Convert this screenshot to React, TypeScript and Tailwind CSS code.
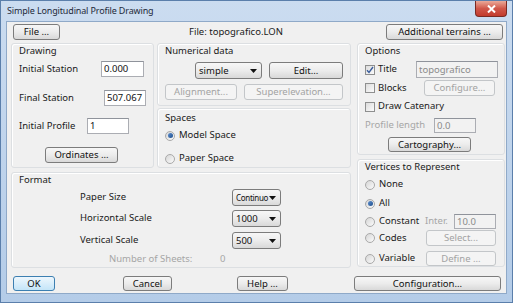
import React from 'react';

type BtnProps = {
  children: React.ReactNode;
  className?: string;
  disabled?: boolean;
  primary?: boolean;
};

const Btn: React.FC<BtnProps> = ({ children, className = '', disabled, primary }) => (
  <div
    className={`flex items-center justify-center rounded-[3px] border leading-none ${
      disabled
        ? 'border-[#c3c6c9] bg-[#f4f4f4] text-[#a3a3a3]'
        : primary
          ? 'border-[#3c7fb1] bg-gradient-to-b from-[#eef7fd] to-[#c4e5f8] text-[#111]'
          : 'border-[#7c7c7c] bg-gradient-to-b from-[#f7f7f7] via-[#ececec] to-[#d9d9d9] text-[#111]'
    } ${className}`}
  >
    {children}
  </div>
);

const Combo: React.FC<{ value: string; className?: string; textClass?: string }> = ({ value, className = '', textClass = '' }) => (
  <div
    className={`flex items-center justify-between rounded-[3px] border border-[#7c7c7c] bg-gradient-to-b from-[#f7f7f7] via-[#ececec] to-[#d9d9d9] pl-[3px] pr-[4px] leading-none text-[#111] ${className}`}
  >
    <span className={textClass}>{value}</span>
    <svg width="7" height="4" viewBox="0 0 7 4" className="shrink-0">
      <path d="M0 0h7L3.5 4z" fill="#111" />
    </svg>
  </div>
);

const Field: React.FC<{ value: string; className?: string; disabled?: boolean }> = ({ value, className = '', disabled }) => (
  <div
    className={`flex items-center border border-[#abadb3] border-t-[#8f939b] pl-[2px] leading-none ${
      disabled ? 'bg-[#f2f2f2] text-[#8a8a8a]' : 'bg-white text-[#111]'
    } ${className}`}
  >
    {value}
  </div>
);

const Check: React.FC<{ checked?: boolean }> = ({ checked }) => (
  <div className="flex h-[10px] w-[10px] shrink-0 items-center justify-center border border-[#8e8f8f] bg-gradient-to-br from-[#dcdcdc] to-[#fbfbfb]">
    {checked && (
      <svg width="8" height="8" viewBox="0 0 8 8">
        <path d="M1 4.2l2 2.3L7 1" stroke="#3a5d9c" strokeWidth="1.4" fill="none" />
      </svg>
    )}
  </div>
);

const Radio: React.FC<{ checked?: boolean }> = ({ checked }) => (
  <div className="flex h-[10px] w-[10px] shrink-0 items-center justify-center rounded-full border border-[#a9a9a9] bg-gradient-to-br from-[#d6d6d6] to-[#fbfbfb]">
    {checked && <div className="h-[5px] w-[5px] rounded-full bg-gradient-to-br from-[#5d8fd0] to-[#1f4f8c]" />}
  </div>
);

const Group: React.FC<{ title: string; className?: string; children?: React.ReactNode }> = ({ title, className = '', children }) => (
  <div className={`flex flex-col rounded-[3px] border border-[#dcdfe2] shadow-[inset_1px_1px_0_#ffffff] ${className}`}>
    <div className="h-[13px] pl-[7px] leading-[13px]">{title}</div>
    {children}
  </div>
);

export default function App() {
  return (
    <div className="flex h-[303px] w-[513px] flex-col overflow-hidden border border-[#5b7fab] bg-gradient-to-b from-[#cbdcf0] to-[#b4cce8] font-['Noto_Sans',sans-serif] text-[9.5px] text-[#1a1a1a]">
      {/* Title bar */}
      <div className="flex h-[20px] shrink-0 items-start justify-between">
        <div className="pl-[6px] pt-[2px] text-[9px] leading-[16px] tracking-[-0.15px] text-[#1e2a3a]">Simple Longitudinal Profile Drawing</div>
        <div className="mr-[5px] flex h-[16px] w-[32px] items-center justify-center rounded-b-[4px] border border-t-0 border-[#7a2a22] bg-gradient-to-b from-[#e9a99a] via-[#d0574a] to-[#c23a2c]">
          <svg width="9" height="8" viewBox="0 0 9 8">
            <path d="M1 0.5l7 7M8 0.5l-7 7" stroke="#fff" strokeWidth="2" />
          </svg>
        </div>
      </div>

      {/* Client area */}
      <div className="mx-[5px] flex h-[273px] shrink-0 flex-col border border-[#8fa9c8] bg-[#f0f0f0]">
        {/* Top row */}
        <div className="mt-[2px] flex h-[16px] items-center">
          <Btn className="ml-[6px] h-[16px] w-[47px]">File ...</Btn>
          <div className="flex-1 pl-[129px]">File: topografico.LON</div>
          <Btn className="mr-[3px] h-[16px] w-[117px]">Additional terrains ...</Btn>
        </div>

        {/* Main */}
        <div className="mt-[3px] flex">
          {/* Left column */}
          <div className="ml-[4px] flex w-[340px] flex-col">
            <div className="flex h-[125px] gap-[3px]">
              <Group title="Drawing" className="w-[143px]">
                <div className="mt-[4px] flex h-[16px] items-center pl-[7px]">
                  <span className="w-[82px]">Initial Station</span>
                  <Field value="0.000" className="h-[16px] w-[43px]" />
                </div>
                <div className="mt-[13px] flex h-[16px] items-center pl-[7px]">
                  <span className="w-[85px]">Final Station</span>
                  <Field value="507.067" className="h-[16px] w-[42px]" />
                </div>
                <div className="mt-[12px] flex h-[16px] items-center pl-[7px]">
                  <span className="w-[68px]">Initial Profile</span>
                  <Field value="1" className="h-[16px] w-[42px]" />
                </div>
                <div className="mt-[13px] flex pl-[33px]">
                  <Btn className="h-[16px] w-[73px]">Ordinates ...</Btn>
                </div>
              </Group>

              <div className="flex w-[194px] flex-col gap-[2px]">
                <Group title="Numerical data" className="h-[63px]">
                  <div className="mt-[5px] flex h-[17px] gap-[7px] pl-[37px]">
                    <Combo value="simple" className="h-[17px] w-[67px]" />
                    <Btn className="h-[17px] w-[74px]">Edit...</Btn>
                  </div>
                  <div className="mt-[5px] flex h-[16px] gap-[7px] pl-[7px]">
                    <Btn disabled className="h-[16px] w-[72px]">Alignment...</Btn>
                    <Btn disabled className="h-[16px] w-[99px]">Superelevation...</Btn>
                  </div>
                </Group>
                <Group title="Spaces" className="h-[60px] pt-[2px]">
                  <div className="mt-[5px] flex h-[13px] items-center gap-[4px] pl-[7px]">
                    <Radio checked />
                    <span>Model Space</span>
                  </div>
                  <div className="mt-[10px] flex h-[13px] items-center gap-[4px] pl-[7px]">
                    <Radio />
                    <span>Paper Space</span>
                  </div>
                </Group>
              </div>
            </div>

            <Group title="Format" className="mt-[4px] h-[96px]">
              <div className="mt-[3px] flex h-[17px] items-center pl-[68px]">
                <span className="w-[152px]">Paper Size</span>
                <Combo value="Continuo" textClass="text-[8px] tracking-[-0.3px]" className="h-[17px] w-[49px]" />
              </div>
              <div className="mt-[4px] flex h-[17px] items-center pl-[68px]">
                <span className="w-[152px]">Horizontal Scale</span>
                <Combo value="1000" className="h-[17px] w-[49px]" />
              </div>
              <div className="mt-[5px] flex h-[17px] items-center pl-[68px]">
                <span className="w-[152px]">Vertical Scale</span>
                <Combo value="500" className="h-[17px] w-[49px]" />
              </div>
              <div className="mt-[4px] flex h-[12px] items-center pl-[97px] text-[#a6a6a6]">
                <span className="w-[111px]">Number of Sheets:</span>
                <span>0</span>
              </div>
            </Group>
          </div>

          {/* Right column */}
          <div className="ml-[6px] flex w-[148px] flex-col gap-[4px]">
            <Group title="Options" className="h-[112px]">
              <div className="mt-[4px] flex h-[17px] items-center pl-[7px]">
                <div className="flex w-[51px] items-center gap-[3px]">
                  <Check checked />
                  <span>Title</span>
                </div>
                <Field value="topografico" disabled className="h-[17px] w-[82px]" />
              </div>
              <div className="mt-[2px] flex h-[16px] items-center pl-[7px]">
                <div className="flex w-[59px] items-center gap-[3px]">
                  <Check />
                  <span>Blocks</span>
                </div>
                <Btn disabled className="h-[16px] w-[71px]">Configure...</Btn>
              </div>
              <div className="mt-[4px] flex h-[13px] items-center gap-[3px] pl-[7px]">
                <Check />
                <span>Draw Catenary</span>
              </div>
              <div className="mt-[5px] flex h-[15px] items-center pl-[7px] text-[#a6a6a6]">
                <span className="w-[69px]">Profile length</span>
                <Field value="0.0" disabled className="h-[15px] w-[42px]" />
              </div>
              <div className="mt-[4px] flex pl-[30px]">
                <Btn className="h-[15px] w-[83px]">Cartography...</Btn>
              </div>
            </Group>

            <Group title="Vertices to Represent" className="h-[108px]">
              <div className="mt-[5px] flex h-[13px] items-center gap-[4px] pl-[7px]">
                <Radio />
                <span>None</span>
              </div>
              <div className="mt-[6px] flex h-[13px] items-center gap-[4px] pl-[7px]">
                <Radio checked />
                <span>All</span>
              </div>
              <div className="mt-[4px] flex h-[16px] items-center pl-[7px]">
                <div className="flex w-[60px] items-center gap-[4px]">
                  <Radio />
                  <span>Constant</span>
                </div>
                <span className="w-[29px] text-[#a6a6a6]">Inter.</span>
                <Field value="10.0" disabled className="h-[15px] w-[42px]" />
              </div>
              <div className="mt-[1px] flex h-[16px] items-center pl-[7px]">
                <div className="flex w-[61px] items-center gap-[4px]">
                  <Radio />
                  <span>Codes</span>
                </div>
                <Btn disabled className="h-[16px] w-[70px]">Select...</Btn>
              </div>
              <div className="mt-[5px] flex h-[15px] items-center pl-[7px]">
                <div className="flex w-[61px] items-center gap-[4px]">
                  <Radio />
                  <span>Variable</span>
                </div>
                <Btn disabled className="h-[15px] w-[70px]">Define ...</Btn>
              </div>
            </Group>
          </div>
        </div>

        {/* Bottom buttons */}
        <div className="mt-[8px] flex h-[15px] items-center">
          <Btn primary className="ml-[6px] h-[15px] w-[42px]">OK</Btn>
          <Btn className="ml-[68px] h-[15px] w-[49px]">Cancel</Btn>
          <Btn className="ml-[65px] h-[15px] w-[51px]">Help ...</Btn>
          <Btn className="ml-[66px] h-[15px] w-[147px]">Configuration...</Btn>
        </div>
      </div>
    </div>
  );
}
